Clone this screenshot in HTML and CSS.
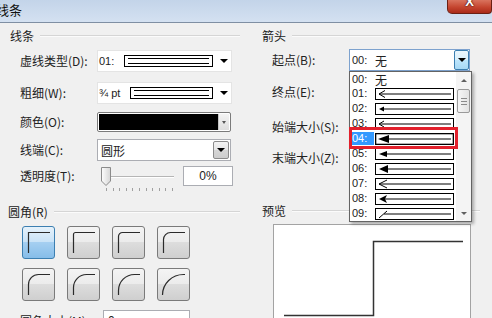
FILE: index.html
```html
<!DOCTYPE html>
<html lang="zh-CN">

<head>
    <meta charset="UTF-8">
    <meta name="viewport" content="width=device-width, initial-scale=1.0">
    <title>线条</title>
    <link rel="stylesheet" href="styles.css">
</head>

<body>

    <div class="window">
        <div class="titlebar">
            <span class="title">线条</span>
            <span class="close">X</span>
        </div>

        <div class="content">
            <!-- 左侧：线条 + 圆角 -->
            <div class="col col-left">
                <div class="group-title"><span>线条</span><i class="rule"></i></div>

                <div class="row r1">
                    <label>虚线类型(D):</label>
                    <div class="combo combo-plain">
                        <span class="code code-dash">01:</span>
                        <span class="line-sample w89"></span>
                        <span class="caret"></span>
                    </div>
                </div>

                <div class="row r2">
                    <label>粗细(W):</label>
                    <div class="combo combo-plain">
                        <span class="code code-width">¾ pt</span>
                        <span class="line-sample w83"></span>
                        <span class="caret"></span>
                    </div>
                </div>

                <div class="row r3">
                    <label>颜色(O):</label>
                    <div class="combo-color">
                        <span class="swatch"></span>
                        <span class="color-btn"><span class="caret small"></span></span>
                    </div>
                </div>

                <div class="row r4">
                    <label>线端(C):</label>
                    <div class="combo combo-box">
                        <span>圆形</span>
                        <span class="drop-btn"><span class="caret"></span></span>
                    </div>
                </div>

                <div class="row r5">
                    <label>透明度(T):</label>
                    <svg class="slider" width="80" height="26" viewBox="0 0 80 26">
                        <line x1="8" y1="10.5" x2="77" y2="10.5" stroke="#b5b5b5" />
                        <line x1="8" y1="11.5" x2="77" y2="11.5" stroke="#ffffff" />
                        <defs>
                            <linearGradient id="thumb" x1="0" y1="0" x2="1" y2="0">
                                <stop offset="0" stop-color="#fdfdfd" />
                                <stop offset="1" stop-color="#d6d6d6" />
                            </linearGradient>
                        </defs>
                        <path d="M4.5 1.5 H13.5 V15 L9 19.5 L4.5 15 Z" fill="url(#thumb)" stroke="#8b8b8b" />
                        <g stroke="#a0a0a0">
                            <line x1="9.5" y1="22" x2="9.5" y2="25" />
                            <line x1="16.5" y1="22" x2="16.5" y2="25" />
                            <line x1="22.5" y1="22" x2="22.5" y2="25" />
                            <line x1="29.5" y1="22" x2="29.5" y2="25" />
                            <line x1="35.5" y1="22" x2="35.5" y2="25" />
                            <line x1="42.5" y1="22" x2="42.5" y2="25" />
                            <line x1="49.5" y1="22" x2="49.5" y2="25" />
                            <line x1="55.5" y1="22" x2="55.5" y2="25" />
                            <line x1="62.5" y1="22" x2="62.5" y2="25" />
                            <line x1="68.5" y1="22" x2="68.5" y2="25" />
                            <line x1="75.5" y1="22" x2="75.5" y2="25" />
                        </g>
                    </svg>
                    <div class="pct">0%</div>
                </div>

                <div class="group-title g2"><span>圆角(R)</span><i class="rule"></i></div>

                <div class="corners">
                    <div class="corner active"><svg width="31" height="31"><path d="M5.5 26 V5.5 H27" /></svg></div>
                    <div class="corner"><svg width="31" height="31"><path d="M5.5 26 V7.5 A2 2 0 0 1 7.5 5.5 H27" /></svg></div>
                    <div class="corner"><svg width="31" height="31"><path d="M5.5 26 V9.5 A4 4 0 0 1 9.5 5.5 H27" /></svg></div>
                    <div class="corner"><svg width="31" height="31"><path d="M5.5 26 V12.5 A7 7 0 0 1 12.5 5.5 H27" /></svg></div>
                    <div class="corner"><svg width="31" height="31"><path d="M5.5 26 V15.5 A10 10 0 0 1 15.5 5.5 H27" /></svg></div>
                    <div class="corner"><svg width="31" height="31"><path d="M5.5 26 V18.5 A13 13 0 0 1 18.5 5.5 H27" /></svg></div>
                    <div class="corner"><svg width="31" height="31"><path d="M5.5 26 V21.5 A16 16 0 0 1 21.5 5.5 H27" /></svg></div>
                    <div class="corner"><svg width="31" height="31"><path d="M4.5 26 A21 20.5 0 0 1 25.5 5.5 H27" /></svg></div>
                </div>

                <div class="row r6">
                    <label class="wide">圆角大小(M):</label>
                    <div class="size-input">0</div>
                </div>
            </div>

            <!-- 右侧：箭头 + 预览 -->
            <div class="col col-right">
                <div class="group-title"><span>箭头</span><i class="rule"></i></div>

                <div class="row rr1">
                    <label>起点(B):</label>
                    <div class="combo combo-focus">
                        <span class="num">00:</span><span>无</span>
                        <span class="drop-btn hot"><span class="caret"></span></span>
                    </div>
                </div>
                <div class="row rr2"><label>终点(E):</label></div>
                <div class="row rr3"><label>始端大小(S):</label></div>
                <div class="row rr4"><label>末端大小(Z):</label></div>

                <div class="group-title g3"><span>预览</span><i class="rule"></i></div>

                <div class="preview">
                    <svg width="196" height="100">
                        <path d="M10 90.5 H99.5 V16.5 H189" fill="none" stroke="#333" stroke-width="1.5" />
                    </svg>
                </div>
            </div>
        </div>

        <!-- 下拉列表（展开状态） -->
        <div class="arrow-list">
            <div class="items">
                <div class="item first"><span class="num">00:</span><span>无</span></div>
                <div class="item"><span class="num">01:</span>
                    <svg class="sample" width="79" height="12"><rect x="0.5" y="0.5" width="78" height="11" /><path class="open" d="M10 2.5 L4 6 L10 9.5" /><line x1="4" y1="6" x2="76" y2="6" /></svg>
                </div>
                <div class="item"><span class="num">02:</span>
                    <svg class="sample" width="79" height="12"><rect x="0.5" y="0.5" width="78" height="11" /><path class="fill" d="M4 6 L9 3.5 L9 8.5 Z" /><line x1="6" y1="6" x2="76" y2="6" /></svg>
                </div>
                <div class="item"><span class="num">03:</span>
                    <svg class="sample" width="79" height="12"><rect x="0.5" y="0.5" width="78" height="11" /><path class="open" d="M9 3 L4 6 L9 9" /><line x1="4" y1="6" x2="76" y2="6" /></svg>
                </div>
                <div class="item"><span class="num sel">04:</span>
                    <svg class="sample" width="79" height="12"><rect x="0.5" y="0.5" width="78" height="11" stroke-width="1.6" /><path class="fill" d="M3 6 L14 2 L14 10 Z" /><line x1="8" y1="6" x2="76" y2="6" /></svg>
                </div>
                <div class="item"><span class="num">05:</span>
                    <svg class="sample" width="79" height="12"><rect x="0.5" y="0.5" width="78" height="11" /><path class="fill" d="M4 6 L12 3 L12 9 Z" /><line x1="8" y1="6" x2="76" y2="6" /></svg>
                </div>
                <div class="item"><span class="num">06:</span>
                    <svg class="sample" width="79" height="12"><rect x="0.5" y="0.5" width="78" height="11" /><path class="fill" d="M4 6 L13 2 L13 10 Z" /><line x1="8" y1="6" x2="76" y2="6" /></svg>
                </div>
                <div class="item"><span class="num">07:</span>
                    <svg class="sample" width="79" height="12"><rect x="0.5" y="0.5" width="78" height="11" /><path class="open" d="M12 2 L4 6 L12 10" /><line x1="4" y1="6" x2="76" y2="6" /></svg>
                </div>
                <div class="item"><span class="num">08:</span>
                    <svg class="sample" width="79" height="12"><rect x="0.5" y="0.5" width="78" height="11" /><path class="fill" d="M4 6 L12 2 L10 6 L12 10 Z" /><line x1="8" y1="6" x2="76" y2="6" /></svg>
                </div>
                <div class="item"><span class="num">09:</span>
                    <svg class="sample" width="79" height="12"><rect x="0.5" y="0.5" width="78" height="11" /><path class="open" d="M4 10 L12 3" /><line x1="9" y1="6" x2="76" y2="6" /></svg>
                </div>
            </div>
            <div class="scrollbar">
                <span class="sb-btn"><span class="tri up"></span></span>
                <span class="sb-thumb"><i></i><i></i><i></i></span>
                <span class="sb-track"></span>
                <span class="sb-btn"><span class="tri down"></span></span>
            </div>
        </div>

        <!-- 红色标注框 -->
        <div class="mark"></div>
    </div>

</body>

</html>
```

FILE: styles.css
```css
/* Reset some default styles */
* {
    margin: 0;
    padding: 0;
    box-sizing: border-box;
}

body {
    width: 492px;
    height: 318px;
    overflow: hidden;
    font-family: "Noto Sans CJK SC", "Liberation Sans", sans-serif;
    font-size: 12px;
    color: #222;
    background-color: #f0f0f0;
}

.window {
    position: relative;
    height: 318px;
}

/* Title bar */
.titlebar {
    height: 23px;
    display: flex;
    justify-content: space-between;
    align-items: flex-start;
    background: linear-gradient(#c3d4e9, #d4e1f1);
    border-bottom: 1px solid #7f8fa3;
}

.title {
    margin-left: -4px;
    margin-top: 2px;
    font-size: 13px;
    line-height: 15px;
    color: #111;
}

.close {
    width: 45px;
    height: 14px;
    overflow: hidden;
    background: linear-gradient(#d9735e, #c5452f 55%, #a92a19);
    border: 1px solid #6b2014;
    border-top: none;
    border-radius: 0 0 4px 5px;
    color: #fff;
    font: bold 13px "Liberation Sans", sans-serif;
    line-height: 4px;
    text-align: center;
    text-shadow: 0 0 2px #3a0a04, 0 0 1px #3a0a04;
}

/* Columns */
.content {
    display: flex;
}

.col-left {
    width: 245px;
    padding: 6px 5px 0 0;
}

.col-right {
    flex: 1;
    padding: 6px 12px 0 0;
}

.group-title {
    display: flex;
    align-items: center;
    height: 14px;
    line-height: 14px;
}

.col-left .group-title {
    padding-left: 10px;
}

.col-left .g2 {
    padding-left: 8px;
    margin-top: 13px;
}

.col-right .group-title {
    padding-left: 17px;
}

.col-right .g3 {
    margin-top: 35px;
}

.rule {
    flex: 1;
    height: 2px;
    margin-left: 6px;
    border-top: 1px solid #d5d5d5;
    border-bottom: 1px solid #fbfbfb;
}

/* Form rows */
.row {
    display: flex;
    align-items: center;
    height: 22px;
    padding-left: 20px;
}

.col-right .row {
    padding-left: 27px;
}

.row label {
    width: 77px;
    flex-shrink: 0;
    line-height: 20px;
}

.row label.wide {
    width: 83px;
}

.r1 { margin-top: 7px; }
.r2 { margin-top: 10px; }
.r3 { margin-top: 8px; height: 20px; }
.r4 { margin-top: 7px; }
.r5 { margin-top: 5px; height: 26px; align-items: flex-start; }
.r6 { margin-top: 9px; }

.rr1 { margin-top: 6px; }
.rr2 { margin-top: 10px; }
.rr3 { margin-top: 13px; }
.rr4 { margin-top: 9px; }

/* Combo boxes */
.combo {
    display: flex;
    align-items: center;
    width: 135px;
    height: 22px;
    background-color: #fff;
}

.combo-plain {
    border: 1px solid #e4e4e4;
    padding-left: 1px;
}

.code {
    font-family: "Liberation Sans", sans-serif;
    font-size: 11px;
}

.code-dash { width: 25px; }
.code-width { width: 31px; }

.line-sample {
    display: flex;
    align-items: center;
    height: 12px;
    padding: 0 3px;
    border: 1px solid #000;
}

.line-sample::before {
    content: "";
    flex: 1;
    height: 4px;
    border-top: 1px solid #000;
    border-bottom: 1px solid #000;
}

.w89 { width: 89px; }
.w83 { width: 83px; }

.caret {
    width: 0;
    height: 0;
    border-left: 4px solid transparent;
    border-right: 4px solid transparent;
    border-top: 4px solid #000;
}

.combo-plain .caret {
    margin-left: auto;
    margin-right: 3px;
}

.caret.small {
    border-left-width: 2px;
    border-right-width: 2px;
    border-top-width: 3px;
    border-top-color: #555;
}

.combo-color {
    display: flex;
    width: 134px;
    height: 20px;
    padding: 1px;
    border: 1px solid #7b7b7b;
    border-radius: 2px;
    background-color: #fff;
}

.swatch {
    flex: 1;
    background-color: #000;
}

.color-btn {
    display: flex;
    align-items: center;
    justify-content: center;
    width: 11px;
    border-left: 1px solid #c4c4c4;
    background: linear-gradient(#f4f4f4, #dedede);
}

.combo-box {
    width: 134px;
    padding-left: 3px;
    border: 1px solid #abadb3;
}

.drop-btn {
    display: flex;
    align-items: center;
    justify-content: center;
    width: 16px;
    height: 18px;
    margin-left: auto;
    margin-right: 1px;
    border: 1px solid #8b8b8b;
    border-radius: 2px;
    background: linear-gradient(#f3f3f3, #e6e6e6 50%, #d6d6d6 50%, #cdcdcd);
}

.combo-focus {
    width: 121px;
    padding-left: 2px;
    border: 1px solid #7da2ce;
}

.combo-focus .num {
    width: 23px;
}

.drop-btn.hot {
    width: 15px;
    height: 20px;
    margin-right: 0;
    border-color: #3c7fb1;
    background: linear-gradient(#eaf6fd, #d9f0fc 50%, #bee6fd 50%, #a7d9f5);
}

.num {
    font-family: "Liberation Sans", sans-serif;
    font-size: 11px;
}

/* Slider + percent */
.slider {
    display: block;
    flex-shrink: 0;
}

.pct {
    width: 50px;
    height: 20px;
    margin-left: 6px;
    border: 1px solid #abadb3;
    background-color: #fff;
    text-align: center;
    font-family: "Liberation Sans", sans-serif;
    font-size: 12px;
    line-height: 18px;
}

/* Corner buttons */
.corners {
    display: grid;
    grid-template-columns: repeat(4, 33px);
    gap: 9px 12px;
    margin-top: 7px;
    padding-left: 22px;
}

.corner {
    width: 33px;
    height: 33px;
    border: 1px solid #7a7a7a;
    border-radius: 3px;
    background: linear-gradient(#f4f4f4, #ebebeb 50%, #dddddd 50%, #cfcfcf);
}

.corner.active {
    border-color: #3c7fb1;
    background: linear-gradient(#e6f2fb, #c8e2f7 50%, #a5cff1 50%, #86bde9);
}

.corner svg {
    display: block;
}

.corner path {
    fill: none;
    stroke: #2b2b2b;
    stroke-width: 1.2;
}

.size-input {
    width: 87px;
    height: 22px;
    padding-left: 4px;
    border: 1px solid #abadb3;
    background-color: #fff;
    font-family: "Liberation Sans", sans-serif;
    line-height: 20px;
}

/* Preview */
.preview {
    width: 198px;
    height: 100px;
    margin: 6px 0 0 28px;
    border: 1px solid #a3a3a3;
    background-color: #fff;
}

.preview svg {
    display: block;
}

/* Drop-down list */
.arrow-list {
    position: absolute;
    left: 349px;
    top: 71px;
    width: 123px;
    height: 151px;
    display: flex;
    border: 1px solid #646464;
    background-color: #fff;
    box-shadow: 2px 2px 3px rgba(0, 0, 0, 0.3);
}

.items {
    flex: 1;
}

.item {
    display: flex;
    align-items: center;
    height: 15px;
    padding-left: 1px;
}

.item.first {
    height: 14px;
}

.item .num {
    width: 24px;
    padding-left: 1px;
    line-height: 13px;
}

.item .num.sel {
    width: 23px;
    margin-right: 1px;
    background-color: #3399ff;
    color: #fff;
}

.sample {
    display: block;
}

.sample rect {
    fill: #fff;
    stroke: #000;
}

.sample line,
.sample .open {
    fill: none;
    stroke: #000;
}

.sample .fill {
    fill: #000;
}

.scrollbar {
    display: flex;
    flex-direction: column;
    width: 15px;
    background-color: #f4f4f4;
}

.sb-btn {
    display: flex;
    align-items: center;
    justify-content: center;
    height: 16px;
}

.tri {
    width: 0;
    height: 0;
    border-left: 3px solid transparent;
    border-right: 3px solid transparent;
}

.tri.up {
    border-bottom: 3px solid #606060;
}

.tri.down {
    border-top: 3px solid #606060;
}

.sb-thumb {
    display: flex;
    flex-direction: column;
    align-items: center;
    justify-content: center;
    gap: 2px;
    height: 24px;
    margin: 1px 1px 0;
    border: 1px solid #9a9a9a;
    border-radius: 2px;
    background: linear-gradient(90deg, #f6f6f6, #e2e2e2);
}

.sb-thumb i {
    width: 6px;
    height: 1px;
    background-color: #8a8a8a;
}

.sb-track {
    flex: 1;
}

/* Red annotation box */
.mark {
    position: absolute;
    left: 349px;
    top: 127px;
    width: 109px;
    height: 22px;
    border: 3px solid #e2202c;
}
```
